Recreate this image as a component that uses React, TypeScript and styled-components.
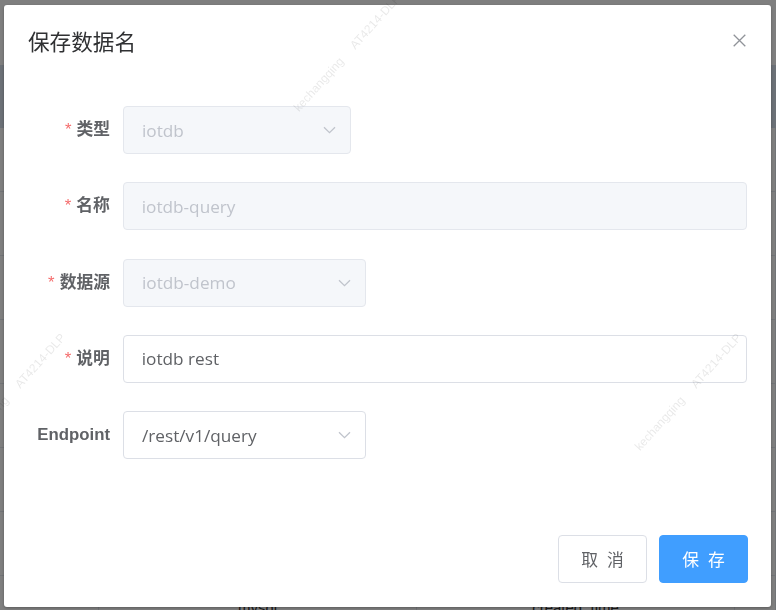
import styled, {createGlobalStyle} from "styled-components";

const GlobalStyle = createGlobalStyle`
    html, body {
        margin: 0;
        padding: 0;
        background: #fff;
        font-family: "Liberation Sans", "Noto Sans CJK SC", sans-serif;
    }
    * {
        box-sizing: border-box;
    }
`;

// 뒤에 깔린 페이지 (목록 테이블)
const Page = styled.div`
    width: 776px;
    height: 610px;
    overflow: hidden;
`;

const TopBar = styled.div`
    height: 65px;
    background: #fff;
`;

const TableHead = styled.div`
    height: 63px;
    background: #d8e2ee;
`;

const TableRow = styled.div`
    display: grid;
    grid-template-columns: 99px 318px 318px 1fr;
    height: 64px;
    border-bottom: 1px solid #e4e8ef;
`;

const Cell = styled.div`
    display: flex;
    align-items: center;
    justify-content: center;
    border-right: 1px solid #e4e8ef;
    font-size: 15px;
    color: #333;
`;

const Overlay = styled.div`
    position: fixed;
    inset: 0;
    background: rgba(0, 0, 0, 0.5);
    padding: 5px 0 0 4px;
`;

const Dialog = styled.div`
    position: relative;
    width: 767px;
    background: #fff;
    border-radius: 3px;
    box-shadow: 0 1px 3px rgba(0, 0, 0, 0.3);
`;

const Header = styled.div`
    padding: 21px 24px 15px;
`;

const Title = styled.div`
    font-family: "Noto Sans CJK SC", sans-serif;
    font-size: 21.6px;
    line-height: 29px;
    color: #303133;
`;

const CloseButton = styled.button`
    position: absolute;
    top: 23px;
    right: 20px;
    width: 24px;
    height: 24px;
    padding: 0;
    border: none;
    background: none;
    display: flex;
    align-items: center;
    justify-content: center;
    cursor: pointer;
`;

const Body = styled.div`
    padding: 36px 24px;
`;

const FormItem = styled.div`
    display: flex;
    margin-bottom: 28.3px;
`;

const Label = styled.label<{ $required?: boolean }>`
    width: 95px;
    padding-right: 13px;
    text-align: right;
    line-height: 48px;
    font-size: 16.8px;
    font-weight: 700;
    color: #606266;
    white-space: nowrap;

    &::before {
        content: ${props => props.$required ? "'*'" : "none"};
        color: #f56c6c;
        margin-right: 5px;
        font-weight: 400;
    }
`;

const Field = styled.div<{ $width: number; $disabled?: boolean }>`
    width: ${props => props.$width}px;
    height: 48px;
    display: flex;
    align-items: center;
    justify-content: space-between;
    padding: 0 14px 0 18px;
    border: 1px solid ${props => props.$disabled ? "#e4e7ed" : "#dcdfe6"};
    border-radius: 4px;
    background: ${props => props.$disabled ? "#f5f7fa" : "#fff"};
    color: ${props => props.$disabled ? "#c0c4cc" : "#606266"};
    font-family: "Open Sans", sans-serif;
    font-size: 17.2px;
`;

const Footer = styled.div`
    display: flex;
    justify-content: flex-end;
    gap: 12px;
    padding: 12px 23px 24px;
`;

const Button = styled.button<{ $primary?: boolean }>`
    width: 89px;
    height: 48px;
    padding: 0 0 0 9px;
    border: 1px solid ${props => props.$primary ? "#409eff" : "#dcdfe6"};
    border-radius: 4px;
    background: ${props => props.$primary ? "#409eff" : "#fff"};
    color: ${props => props.$primary ? "#fff" : "#606266"};
    font-family: "Noto Sans CJK SC", sans-serif;
    font-size: 16.8px;
    letter-spacing: 9px;
    cursor: pointer;
`;

const WatermarkLayer = styled.div`
    position: fixed;
    inset: 0;
    pointer-events: none;
    overflow: hidden;
`;

const Mark = styled.span<{ $x: number; $y: number }>`
    position: absolute;
    left: ${props => props.$x}px;
    top: ${props => props.$y}px;
    transform: translate(-50%, -50%) rotate(-48deg);
    white-space: pre;
    font-size: 12px;
    color: rgba(0, 0, 0, 0.09);
`;

const Chevron = () => (
  <svg width="13" height="8" viewBox="0 0 13 8">
    <path d="M1 1.2 L6.5 6.6 L12 1.2" fill="none" stroke="#c0c4cc" strokeWidth="1.3" />
  </svg>
);

const rows = [
  {id: 1, name: "iotdb", type: "iotdb"},
  {id: 2, name: "clickhouse", type: "clickhouse"},
  {id: 3, name: "api", type: "http"},
  {id: 4, name: "demo", type: "mysql"},
  {id: 5, name: "test", type: "mysql"},
  {id: 6, name: "users", type: "mysql"},
  {id: 7, name: "orders", type: "mysql"},
  {id: 8, name: "mysql", type: "created_time"}
];

const marks = [
  {x: 347, y: 53},
  {x: 688, y: 392},
  {x: 12, y: 392}
];

export default function App() {
  return (
    <>
      <GlobalStyle />
      <Page>
        <TopBar />
        <TableHead />
        {
          rows.map(row => (
            <TableRow key={row.id}>
              <Cell />
              <Cell>{row.name}</Cell>
              <Cell>{row.type}</Cell>
              <Cell />
            </TableRow>
          ))
        }
      </Page>
      <Overlay>
        <Dialog>
          <Header>
            <Title>保存数据名</Title>
            <CloseButton aria-label="close">
              <svg width="13" height="13" viewBox="0 0 13 13">
                <path d="M0.7 0.7 L12.3 12.3 M12.3 0.7 L0.7 12.3" stroke="#909399" strokeWidth="1.3" />
              </svg>
            </CloseButton>
          </Header>
          <Body>
            <FormItem>
              <Label $required>类型</Label>
              <Field $width={228} $disabled>
                iotdb
                <Chevron />
              </Field>
            </FormItem>
            <FormItem>
              <Label $required>名称</Label>
              <Field $width={626} $disabled>iotdb-query</Field>
            </FormItem>
            <FormItem>
              <Label $required>数据源</Label>
              <Field $width={243} $disabled>
                iotdb-demo
                <Chevron />
              </Field>
            </FormItem>
            <FormItem>
              <Label $required>说明</Label>
              <Field $width={626}>iotdb rest</Field>
            </FormItem>
            <FormItem>
              <Label>Endpoint</Label>
              <Field $width={243}>
                /rest/v1/query
                <Chevron />
              </Field>
            </FormItem>
          </Body>
          <Footer>
            <Button>取消</Button>
            <Button $primary>保存</Button>
          </Footer>
        </Dialog>
      </Overlay>
      <WatermarkLayer>
        {
          marks.map(mark => (
            <Mark key={mark.x} $x={mark.x} $y={mark.y}>kechangqing     AT4214-DLP</Mark>
          ))
        }
      </WatermarkLayer>
    </>
  );
}
